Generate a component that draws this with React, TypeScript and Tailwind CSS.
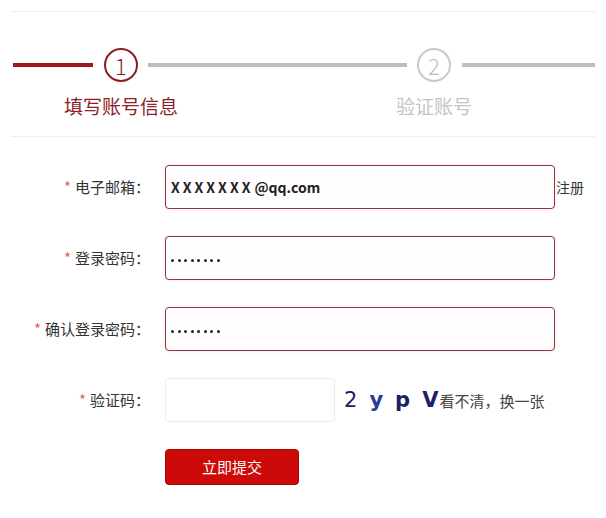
import React from 'react';

const FONT = '"Microsoft YaHei", "Noto Sans CJK SC", "Liberation Sans", sans-serif';

const Field = ({ label, children }: { label: string; children: React.ReactNode }) => (
  <div className="flex items-center">
    <div className="w-[150px] shrink-0 text-right text-[15px] text-[#333]">
      <span className="text-[#d66] mr-[4px]">*</span>
      {label}：
    </div>
    <div className="ml-[15px] flex items-center">{children}</div>
  </div>
);

// masked password: small round dots
const Dots = () => (
  <div className="flex items-center gap-[3.5px] mt-[4px]">
    {Array.from({ length: 8 }).map((_, i) => (
      <span key={i} className="w-[3px] h-[3px] rounded-full bg-[#222]" />
    ))}
  </div>
);

const inputCls =
  'w-[390px] h-[44px] rounded-[4px] border border-[#8a3b40] bg-[#fffdfd] shadow-[0_0_3px_#f3d6d8] flex items-center px-[5px]';

const App = () => {
  return (
    <div className="w-[606px] h-[518px] bg-white overflow-hidden" style={{ fontFamily: FONT }}>
      <div className="mx-[11px] mt-[11px] border-t border-[#eeeeee]">
        {/* step bar */}
        <div className="flex items-center mt-[36px] pl-[2px]">
          <div className="w-[80px] h-[4px] bg-[#a3161c]" />
          <div className="ml-[11px] w-[34px] h-[34px] rounded-full border-2 border-[#8c1d22] flex items-center justify-center text-[22px] leading-none text-[#8c1d22] font-light">
            1
          </div>
          <div className="ml-[10px] w-[259px] h-[4px] bg-[#bdbdbd]" />
          <div className="ml-[10px] w-[34px] h-[34px] rounded-full border-2 border-[#c9c9c9] flex items-center justify-center text-[22px] leading-none text-[#bdbdbd] font-light">
            2
          </div>
          <div className="ml-[11px] flex-1 h-[4px] bg-[#bdbdbd]" />
        </div>
        <div className="flex mt-[12px]">
          <div className="w-[220px] text-center text-[19px] leading-[24px] text-[#8b2228]">填写账号信息</div>
          <div className="ml-[93px] w-[220px] text-center text-[19px] leading-[24px] text-[#c4c4c4]">验证账号</div>
        </div>
        <div className="mt-[18px] border-t border-[#eeeeee]" />
      </div>

      <div className="mt-[28px] flex flex-col gap-[27px]">
        <Field label="电子邮箱">
          <div className={`${inputCls} text-[14px] font-semibold text-[#222]`}>
            <span className="tracking-[3px]">XXXXXXX</span>
            <span className="ml-[1px]">@qq.com</span>
          </div>
          <span className="ml-[1px] text-[14px] text-[#333]">注册</span>
        </Field>
        <Field label="登录密码">
          <div className={inputCls}>
            <Dots />
          </div>
        </Field>
        <Field label="确认登录密码">
          <div className={inputCls}>
            <Dots />
          </div>
        </Field>
        <Field label="验证码">
          <div className="w-[170px] h-[44px] rounded-[3px] border border-[#ececec] bg-white" />
          <div className="ml-[9px] flex items-baseline text-[21px] leading-none" style={{ fontFamily: '"DejaVu Sans", sans-serif' }}>
            <span className="text-[#1c2060]">2</span>
            <span className="ml-[12px] text-[#2a3a9a] font-bold">y</span>
            <span className="ml-[12px] text-[#1c2060] font-bold">p</span>
            <span className="ml-[12px] text-[#1c1f6a] font-bold">V</span>
          </div>
          <span className="ml-[1px] mt-[2px] text-[15px] text-[#444]">看不清，换一张</span>
        </Field>
        <div className="flex">
          <button className="ml-[165px] w-[134px] h-[36px] rounded-[4px] bg-[#cc0a0a] text-white text-[15px] border border-[#a00]">
            立即提交
          </button>
        </div>
      </div>
    </div>
  );
};

export default App;
